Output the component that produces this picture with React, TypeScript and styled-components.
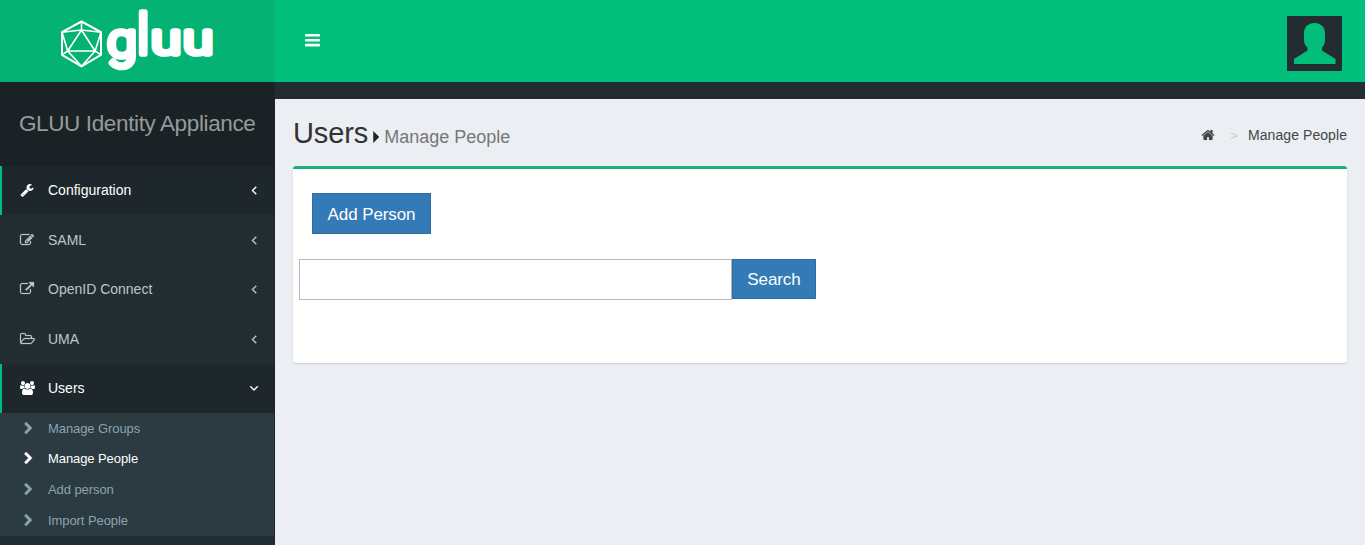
import React from "react";
import styled, { createGlobalStyle } from "styled-components";

const GlobalStyle = createGlobalStyle`
  * { box-sizing: border-box; }
  html, body, #root { height: 100%; }
  body {
    margin: 0;
    overflow: hidden;
    background: #ebeef3;
    font-family: "Liberation Sans", Arial, sans-serif;
    font-size: 14px;
    color: #333;
  }
`;

const paths = {
  wrench:
    "M448 1472q0-26-19-45t-45-19-45 19-19 45 19 45 45 19 45-19 19-45zm644-420l-682 682q-37 37-90 37-52 0-91-37l-106-108q-38-36-38-90 0-53 38-91l681-681q39 98 114.5 173.5t173.5 114.5zm634-435q0 39-23 106-47 134-164.5 217.5t-258.5 83.5q-185 0-316.5-131.5t-131.5-316.5 131.5-316.5 316.5-131.5q58 0 121.5 16.5t107.5 46.5q16 11 16 28t-16 28l-293 169v224l193 107q5-3 79-48.5t135.5-81 70.5-35.5q15 0 23.5 10t8.5 25z",
  edit:
    "M888 1184l116-116-152-152-116 116v56h96v96h56zm440-720q-16-16-33 1l-350 350q-17 17-1 33t33-1l350-350q17-17 1-33zm80 594v190q0 119-84.5 203.5t-203.5 84.5h-832q-119 0-203.5-84.5t-84.5-203.5v-832q0-119 84.5-203.5t203.5-84.5h832q63 0 117 25 15 7 18 23 3 17-9 29l-49 49q-14 14-32 8-23-6-45-6h-832q-66 0-113 47t-47 113v832q0 66 47 113t113 47h832q66 0 113-47t47-113v-126q0-13 9-22l64-64q15-15 35-7t20 29zm-96-738l288 288-672 672h-288v-288zm444 132l-92 92-288-288 92-92q28-28 68-28t68 28l152 152q28 28 28 68t-28 68z",
  external:
    "M1408 928v320q0 119-84.5 203.5t-203.5 84.5h-832q-119 0-203.5-84.5t-84.5-203.5v-832q0-119 84.5-203.5t203.5-84.5h704q14 0 23 9t9 23v64q0 14-9 23t-23 9h-704q-66 0-113 47t-47 113v832q0 66 47 113t113 47h832q66 0 113-47t47-113v-320q0-14 9-23t23-9h64q14 0 23 9t9 23zm384-864v512q0 26-19 45t-45 19-45-19l-176-176-652 652q-10 10-23 10t-23-10l-114-114q-10-10-10-23t10-23l652-652-176-176q-19-19-19-45t19-45 45-19h512q26 0 45 19t19 45z",
  folder:
    "M1845 931q0-35-53-35h-1088q-40 0-85.5 21.5t-71.5 52.5l-294 363q-18 24-18 40 0 35 53 35h1088q40 0 86-22t71-53l294-363q18-22 18-39zm-1141-163h768v-160q0-40-28-68t-68-28h-576q-40 0-68-28t-28-68v-64q0-40-28-68t-68-28h-320q-40 0-68 28t-28 68v853l256-315q44-53 116-87.5t140-34.5zm1269 163q0 62-46 120l-295 363q-43 53-116 87.5t-140 34.5h-1088q-92 0-158-66t-66-158v-960q0-92 66-158t158-66h320q92 0 158 66t66 158v32h544q92 0 158 66t66 158v160h192q54 0 99 24.5t67 70.5q15 32 15 68z",
  users:
    "M593 896q-162 5-265 128h-134q-82 0-138-40.5t-56-118.5q0-353 124-353 6 0 43.5 21t97.5 42.5 119 21.5q67 0 133-23-5 37-5 66 0 143 81 256zm1071 637q0 120-73 189.5t-194 69.5h-874q-121 0-194-69.5t-73-189.5q0-53 3.5-103.5t14-109 26.5-108.5 43-97.5 62-81 85.5-53.5 111.5-20q10 0 43 21.5t73 48 107 48 135 21.5 135-21.5 107-48 73-48 43-21.5q61 0 111.5 20t85.5 53.5 62 81 43 97.5 26.5 108.5 14 109 3.500 103.500zm-1024-1277q0 106-75 181t-181 75-181-75-75-181 75-181 181-75 181 75 75 181zm704 384q0 159-112.5 271.5t-271.5 112.5-271.5-112.5-112.5-271.5 112.5-271.5 271.5-112.5 271.5 112.5 112.5 271.5zm576 225q0 78-56 118.5t-138 40.5h-134q-103-123-265-128 81-113 81-256 0-29-5-66 66 23 133 23 59 0 119-21.5t97.5-42.5 43.5-21q124 0 124 353zm-128-609q0 106-75 181t-181 75-181-75-75-181 75-181 181-75 181 75 75 181z",
  angleLeft:
    "M1203 544q0 13-10 23l-393 393 393 393q10 10 10 23t-10 23l-50 50q-10 10-23 10t-23-10l-466-466q-10-10-10-23t10-23l466-466q10-10 23-10t23 10l50 50q10 10 10 23z",
  angleDown:
    "M1395 736q0 13-10 23l-466 466q-10 10-23 10t-23-10l-466-466q-10-10-10-23t10-23l50-50q10-10 23-10t23 10l393 393 393-393q10-10 23-10t23 10l50 50q10 10 10 23z",
  chevronRight:
    "M1363 877l-742 742q-19 19-45 19t-45-19l-166-166q-19-19-19-45t19-45l531-531-531-531q-19-19-19-45t19-45l166-166q19-19 45-19t45 19l742 742q19 19 19 45t-19 45z",
  home:
    "M1472 992v480q0 26-19 45t-45 19h-384v-384h-256v384h-384q-26 0-45-19t-19-45v-480q0-1 .5-3t.5-3l575-474 575 474q1 2 1 6zm223-69l-62 74q-8 9-21 11h-3q-13 0-21-7l-692-577-692 577q-12 8-24 7-13-2-21-11l-62-74q-8-10-7-23.5t11-21.5l719-599q32-26 76-26t76 26l244 204v-195q0-14 9-23t23-9h192q14 0 23 9t9 23v408l219 182q10 8 11 21.5t-7 23.5z",
};

type IconName = keyof typeof paths;

const IconSvg = styled.svg<{ $weight: number }>`
  display: block;
  flex: none;
  fill: currentColor;
  stroke: currentColor;
  stroke-width: ${(p) => p.$weight};
  overflow: visible;
`;

function Icon({ name, size = 14, weight = 0 }: { name: IconName; size?: number; weight?: number }) {
  const wide = name === "folder" || name === "users";
  return (
    <IconSvg
      $weight={weight}
      width={wide ? (size * 15) / 14 : size}
      height={size}
      viewBox={name === "folder" ? "64 0 1920 1792" : wide ? "0 0 1920 1792" : "0 0 1792 1792"}
      aria-hidden
    >
      <path d={paths[name]} />
    </IconSvg>
  );
}

const Page = styled.div`
  display: flex;
  flex-direction: column;
  height: 545px;
`;

const Header = styled.header`
  display: flex;
  flex: none;
  height: 82px;
  background: #02be7b;
`;

const Brand = styled.a`
  width: 275px;
  height: 82px;
  background: #04b374;

  svg { display: block; }
`;

const NavBar = styled.nav`
  display: flex;
  flex: 1;
  align-items: center;
  justify-content: space-between;
  padding: 0 23px 0 30px;
`;

const MenuToggle = styled.button`
  display: flex;
  flex-direction: column;
  gap: 2px;
  width: 15px;
  padding: 0;
  border: 0;
  background: none;
  margin-top: -2px;

  svg { display: block; }
`;

const Avatar = styled.div`
  width: 55px;
  height: 55px;
  margin-top: 5px;
  background: #222d32;

  svg { display: block; }
`;

const Body = styled.div`
  display: flex;
  flex: 1;
  min-height: 0;
`;

const Sidebar = styled.aside`
  width: 275px;
  background: #222d32;
  border-right: 1px solid #1b2529;
`;

const SidebarTitle = styled.h1`
  display: flex;
  align-items: center;
  height: 84px;
  margin: 0;
  padding-left: 19px;
  background: #1b2225;
  color: #97999b;
  font-size: 22.5px;
  font-weight: 400;
  letter-spacing: -0.38px;
  white-space: nowrap;
`;

const MenuItem = styled.a<{ $active?: boolean }>`
  display: flex;
  align-items: center;
  height: 49.4px;
  padding: 0 13px 0.6px 18px;
  border-left: 2px solid ${(p) => (p.$active ? "#02be7b" : "transparent")};
  background: ${(p) => (p.$active ? "#1e282c" : "transparent")};
  color: ${(p) => (p.$active ? "#fff" : "#b8c7ce")};
`;

const MenuLabel = styled.span`
  flex: 1;
`;

const IconSlot = styled.span<{ $indent?: number }>`
  width: 28px;
  padding-left: ${(p) => p.$indent ?? 0}px;
`;

const SubMenu = styled.div`
  background: #2c3b41;
`;

const SubItem = styled.a<{ $active?: boolean }>`
  display: flex;
  align-items: center;
  height: 30.7px;
  padding-left: 20px;
  color: ${(p) => (p.$active ? "#fff" : "#8aa4af")};
  font-size: 13px;
  letter-spacing: -0.08px;
`;

const Main = styled.main`
  flex: 1;
  border-top: 17px solid #222d32;
  padding: 0 18px;
`;

const ContentHeader = styled.div`
  display: flex;
  align-items: center;
  justify-content: space-between;
  height: 67px;
`;

const Heading = styled.h2`
  display: flex;
  align-items: baseline;
  margin: 2px 0 0;
  font-size: 29px;
  font-weight: 400;
  letter-spacing: -0.1px;
`;

const Caret = styled.span`
  width: 6px;
  height: 12px;
  margin: 0 5px 1px;
  background: #222;
  clip-path: polygon(0 0, 100% 50%, 0 100%);
`;

const SubHeading = styled.small`
  color: #777;
  font-size: 18px;
  letter-spacing: 0;
`;

const Breadcrumb = styled.div`
  display: flex;
  align-items: center;
  padding-top: 5px;
  color: #444;
  letter-spacing: 0.07px;
`;

const Separator = styled.span`
  margin: 0 10px 0 15px;
  color: #ccc;
  font-size: 13px;
`;

const Card = styled.section`
  height: 197px;
  padding: 24px 6px;
  border-top: 3px solid #1bb37c;
  border-radius: 3px;
  background: #fff;
  box-shadow: 0 1px 2px rgba(0, 0, 0, 0.14);
`;

const Button = styled.button<{ $width: number; $height: number }>`
  width: ${(p) => p.$width}px;
  height: ${(p) => p.$height}px;
  padding: 2px 0 0;
  border: 1px solid #2e6da4;
  background: #337ab7;
  color: #fff;
  font: 17px "Liberation Sans", Arial, sans-serif;
  letter-spacing: -0.1px;
`;

const Actions = styled.div`
  padding-left: 13px;
`;

const SearchRow = styled.form`
  display: flex;
  align-items: flex-start;
  margin-top: 25px;
`;

const SearchInput = styled.input`
  width: 433px;
  height: 41px;
  padding: 0 12px;
  border: 1px solid #b9b9bb;
  border-radius: 0;
  background: #fff;
`;

const Wordmark = styled.text`
  fill: #fff;
  stroke: #fff;
  stroke-width: 5.6px;
  stroke-linejoin: round;
  font-family: Roboto, sans-serif;
  font-weight: 300;
`;

function Logo() {
  return (
    <svg width="275" height="82" viewBox="0 0 275 82" aria-label="gluu">
      <g fill="none" stroke="#fff" strokeWidth="1.6" strokeLinejoin="round">
        <path strokeWidth="2" d="M81.500 21.500 101 32.200v22.600L81.500 66.300 62 54.800V32.200z" />
        <path d="M81.500 30 67.700 51h27.400zM81.500 21.500V30M62 32.200l19.500-2.200L101 32.200M62 32.200 67.700 51 62 54.800M101 32.200 95.100 51l5.900 3.800M67.700 51l13.800 15.300L95.100 51" />
      </g>
      <Wordmark x="107" y="56.500" fontSize="49" textLength="30" lengthAdjust="spacingAndGlyphs">g</Wordmark>
      <Wordmark x="137" y="54" fontSize="55">l</Wordmark>
      <Wordmark x="151" y="54" fontSize="42" textLength="30" lengthAdjust="spacingAndGlyphs">u</Wordmark>
      <Wordmark x="183" y="54" fontSize="42" textLength="30" lengthAdjust="spacingAndGlyphs">u</Wordmark>
    </svg>
  );
}

const menu: { icon: IconName; label: string; active?: boolean; open?: boolean }[] = [
  { icon: "wrench", label: "Configuration", active: true },
  { icon: "edit", label: "SAML" },
  { icon: "external", label: "OpenID Connect" },
  { icon: "folder", label: "UMA" },
  { icon: "users", label: "Users", active: true, open: true },
];

const subMenu = ["Manage Groups", "Manage People", "Add person", "Import People"];

export default function App() {
  return (
    <Page>
      <GlobalStyle />
      <Header>
        <Brand>
          <Logo />
        </Brand>
        <NavBar>
          <MenuToggle aria-label="Toggle navigation">
            <svg width="15" height="13" viewBox="0 0 15 13" fill="#fff">
              <rect y="0" width="15" height="2.600" rx="0.700" />
              <rect y="4.900" width="15" height="2.600" rx="0.700" />
              <rect y="9.800" width="15" height="2.600" rx="0.700" />
            </svg>
          </MenuToggle>
          <Avatar>
            <svg width="55" height="55" viewBox="0 0 55 55" fill="#02be7b">
              <path d="M27.500 7C34 7 38 11.200 38 17v7c0 3-1 6-3 7.500v3L48.500 43v5H7v-5l13.500-8.500v-3C18.300 30 17 27 17 24v-7C17 11.200 21 7 27.500 7z" />
            </svg>
          </Avatar>
        </NavBar>
      </Header>
      <Body>
        <Sidebar>
          <SidebarTitle>GLUU Identity Appliance</SidebarTitle>
          {menu.map((item) => (
            <MenuItem key={item.label} $active={item.active}>
              <IconSlot>
                <Icon name={item.icon} weight={item.active ? 0 : 30} />
              </IconSlot>
              <MenuLabel>{item.label}</MenuLabel>
              <Icon name={item.open ? "angleDown" : "angleLeft"} weight={60} />
            </MenuItem>
          ))}
          <SubMenu>
            {subMenu.map((label) => (
              <SubItem key={label} $active={label === "Manage People"}>
                <IconSlot $indent={2}>
                  <Icon name="chevronRight" size={13} weight={60} />
                </IconSlot>
                {label}
              </SubItem>
            ))}
          </SubMenu>
        </Sidebar>
        <Main>
          <ContentHeader>
            <Heading>
              Users
              <Caret />
              <SubHeading>Manage People</SubHeading>
            </Heading>
            <Breadcrumb>
              <Icon name="home" weight={20} />
              <Separator>&gt;</Separator>
              Manage People
            </Breadcrumb>
          </ContentHeader>
          <Card>
            <Actions>
              <Button $width={119} $height={41}>Add Person</Button>
            </Actions>
            <SearchRow>
              <SearchInput aria-label="Search people" />
              <Button type="button" $width={84} $height={40}>Search</Button>
            </SearchRow>
          </Card>
        </Main>
      </Body>
    </Page>
  );
}
